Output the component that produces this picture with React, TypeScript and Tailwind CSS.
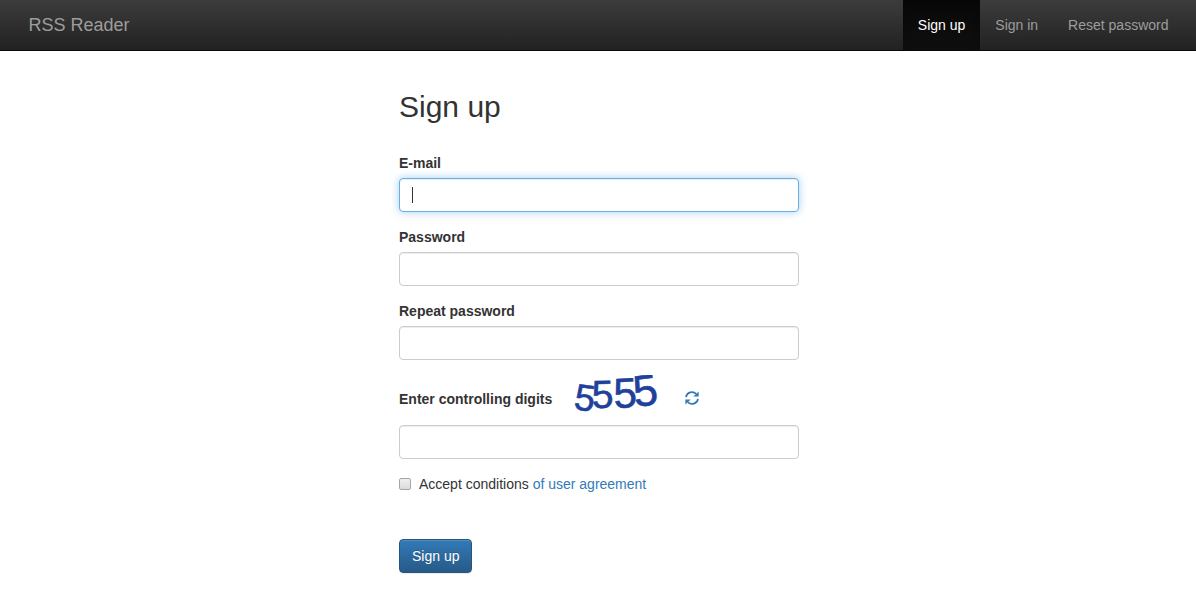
import { useState } from "react";

const navItems = [
  { label: "Sign up", active: true },
  { label: "Sign in", active: false },
  { label: "Reset password", active: false },
];

const inputBase =
  "block h-[34px] w-full rounded-[4px] border bg-white px-3 py-1.5 text-sm text-[#555] outline-none";
const inputPlain =
  "border-[#ccc] shadow-[inset_0_1px_1px_rgba(0,0,0,0.075)] focus:border-[#66afe9]";
const inputActive =
  "border-[#66afe9] caret-transparent shadow-[inset_0_1px_1px_rgba(0,0,0,0.075),0_0_8px_rgba(102,175,233,0.6)]";

function Navbar() {
  return (
    <nav className="border-b border-[#080808] bg-linear-to-b from-[#3c3c3c] to-[#222] pl-px">
      <div className="mx-auto flex max-w-[1170px] flex-wrap items-center justify-between">
        <a href="#home" className="p-[15px] text-lg leading-5 text-[#9d9d9d]">
          RSS Reader
        </a>
        <ul className="flex">
          {navItems.map((item) => (
            <li key={item.label}>
              <a
                href="#nav"
                className={
                  item.active
                    ? "block bg-linear-to-b from-[#080808] to-[#0f0f0f] p-[15px] leading-5 text-white shadow-[inset_0_3px_9px_rgba(0,0,0,0.25)]"
                    : "block p-[15px] leading-5 text-[#9d9d9d]"
                }
              >
                {item.label}
              </a>
            </li>
          ))}
        </ul>
      </div>
    </nav>
  );
}

function Field({ id, label, type, active }: { id: string; label: string; type: string; active?: boolean }) {
  return (
    <div className="mb-[15px]">
      <label htmlFor={id} className="mb-[5px] block font-bold">
        {label}
      </label>
      <div className="relative">
        <input id={id} type={type} className={`${inputBase} ${active ? inputActive : inputPlain}`} />
        {active && <span aria-hidden="true" className="absolute top-[9px] left-[13px] h-4 w-px bg-[#333]" />}
      </div>
    </div>
  );
}

function Captcha() {
  return (
    <svg width="101" height="48" viewBox="0 0 101 48" className="block overflow-visible" aria-label="Captcha">
      <defs>
        <clipPath id="captcha-edge">
          <rect width="101" height="48" />
        </clipPath>
      </defs>
      <g fill="#21409a" stroke="#21409a" strokeWidth="0.6" fontFamily="Liberation Sans, sans-serif">
        <text fontSize="37" transform="translate(5 34) rotate(8)">5</text>
        <text fontSize="39" transform="translate(24 33) rotate(-1)">5</text>
        <text fontSize="42" transform="translate(46 33) rotate(-2)">5</text>
        <g clipPath="url(#captcha-edge)">
          <text fontSize="44" transform="translate(67 32) rotate(-7)">5</text>
        </g>
      </g>
    </svg>
  );
}

function RefreshIcon() {
  return (
    <svg width="14" height="14" viewBox="0 0 14 14" fill="none" aria-hidden="true">
      <path d="M1 6.2A6 6 0 0 1 11.2 2.9" stroke="#337ab7" strokeWidth="1.7" />
      <path d="M13 7.8A6 6 0 0 1 2.8 11.1" stroke="#337ab7" strokeWidth="1.7" />
      <path d="M13.6 0.6V5.6H8.4Z" fill="#337ab7" />
      <path d="M0.4 13.4V8.4H5.6Z" fill="#337ab7" />
    </svg>
  );
}

export default function App() {
  const [accepted, setAccepted] = useState(false);
  return (
    <div className="min-h-screen bg-white font-['Liberation_Sans',Arial,sans-serif] text-sm leading-5 text-[#333]">
      <Navbar />
      <main className="pt-[39px] pr-4 pb-8 pl-[18px]">
        <form className="mx-auto max-w-[400px]" onSubmit={(e) => e.preventDefault()}>
          <h1 className="mb-[30px] text-[30px] leading-[33px]">Sign up</h1>
          <Field id="email" label="E-mail" type="email" active />
          <Field id="password" label="Password" type="password" />
          <Field id="repeat" label="Repeat password" type="password" />
          <div className="mb-[15px]">
            <div className="mb-0.5 flex items-center">
              <label htmlFor="digits" className="font-bold">
                Enter controlling digits
              </label>
              <div className="ml-4">
                <Captcha />
              </div>
              <button type="button" aria-label="Refresh digits" className="ml-4 cursor-pointer pb-0.5">
                <RefreshIcon />
              </button>
            </div>
            <input id="digits" type="text" className={`${inputBase} ${inputPlain}`} />
          </div>
          <div className="flex items-center gap-2">
            <input
              id="accept"
              type="checkbox"
              checked={accepted}
              onChange={(e) => setAccepted(e.target.checked)}
              className="size-3 appearance-none rounded-[2px] border border-[#a6a6a6] bg-linear-to-b from-[#efefef] to-[#dcdcdc] checked:bg-[#337ab7] checked:bg-none"
            />
            <p>
              <label htmlFor="accept">Accept conditions</label>{" "}
              <a href="#agreement" className="text-[#337ab7]">
                of user agreement
              </a>
            </p>
          </div>
          <button
            type="submit"
            className="mt-[45px] block cursor-pointer rounded-[4px] border border-[#245580] bg-linear-to-b from-[#337ab7] to-[#265a88] px-3 py-1.5 text-white shadow-[inset_0_1px_0_rgba(255,255,255,0.15),0_1px_1px_rgba(0,0,0,0.075)] text-shadow-[0_-1px_0_rgba(0,0,0,0.2)]"
          >
            Sign up
          </button>
        </form>
      </main>
    </div>
  );
}
